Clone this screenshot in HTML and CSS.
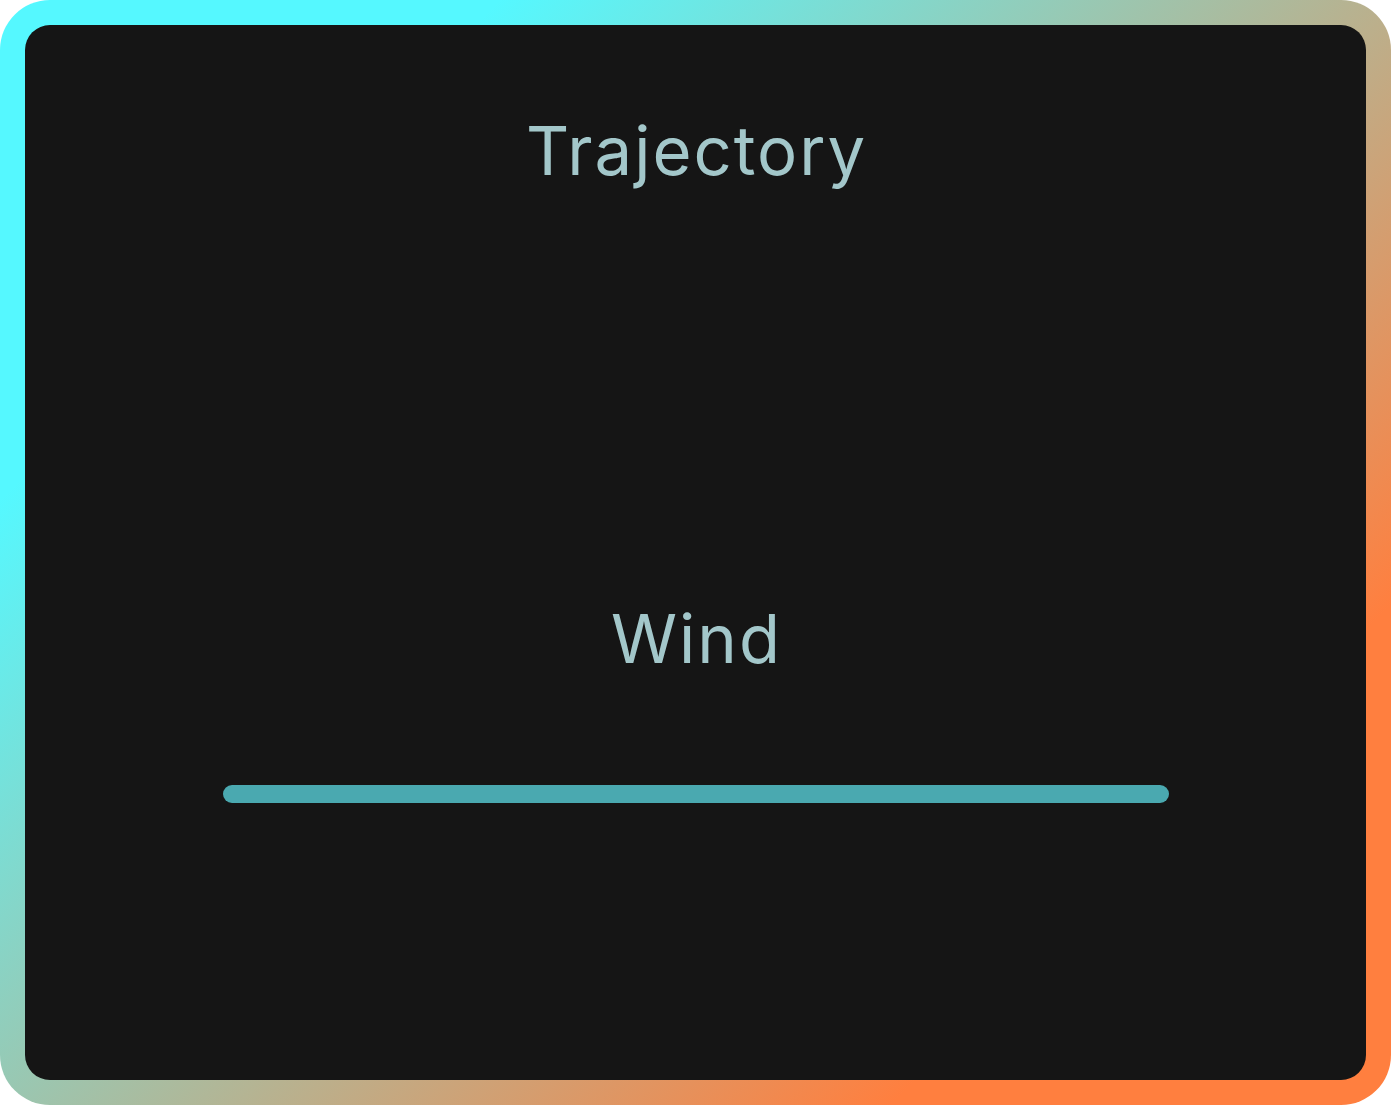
FILE: index.html
```html
<!DOCTYPE html>
<html lang="en">
<head>
<meta charset="utf-8">
<title>Trajectory</title>
<link rel="stylesheet" href="styles.css">
</head>
<body>
<div class="frame">
  <main class="panel">
    <h1 class="title">Trajectory</h1>
    <section class="wind">
      <h2 class="title">Wind</h2>
      <div class="bar"></div>
    </section>
  </main>
</div>
</body>
</html>
```

FILE: styles.css
```css
html, body {
  margin: 0;
  padding: 0;
  background: #ffffff;
}

.frame {
  box-sizing: border-box;
  width: 1391px;
  height: 1105px;
  padding: 25px;
  border-radius: 50px;
  background: linear-gradient(135deg, #55f8ff 20%, #ff7f3f 80%);
  display: flex;
}

.panel {
  flex: 1;
  background: #151515;
  border-radius: 25px;
  display: flex;
  flex-direction: column;
  align-items: center;
  padding-top: 86px;
}

.title {
  margin: 0;
  font-family: Inter, "Liberation Sans", sans-serif;
  font-size: 67px;
  font-weight: 400;
  line-height: 80px;
  letter-spacing: 2px;
  text-indent: 2px;
  color: #a3c7ca;
  text-align: center;
}

.wind {
  margin-top: 408px;
  display: flex;
  flex-direction: column;
  align-items: center;
}

.bar {
  margin-top: 106px;
  width: 946px;
  height: 18px;
  border-radius: 9px;
  background: #4aa9b0;
}
```
